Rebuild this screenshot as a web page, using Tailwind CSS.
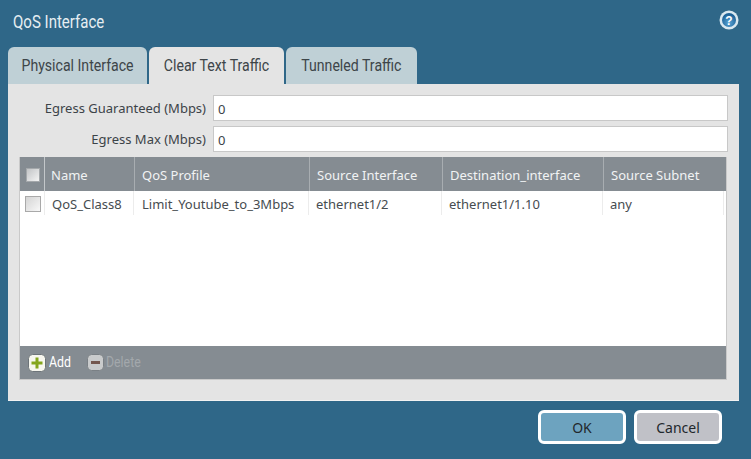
<!DOCTYPE html>
<html lang="en">
<head>
  <meta charset="UTF-8" />
  <title>QoS Interface</title>
  <script src="https://cdn.jsdelivr.net/npm/@tailwindcss/browser@4"></script>
</head>
<body class="bg-[#2f6788] w-[751px] h-[459px] overflow-hidden font-['Noto_Sans',sans-serif] text-[13px] text-[#3c4348]">
  <div class="flex flex-col h-full pl-2 pr-3">
    <!-- title -->
    <div class="flex justify-between items-start h-[47px] pl-[5px]">
      <h1 class="font-['Roboto',sans-serif] text-[18px] leading-[21px] mt-[11px] scale-x-[0.835] origin-left text-[#e6eef2]">QoS Interface</h1>
      <svg class="w-[20px] h-[20px] mt-[10px]" viewBox="0 0 20 20">
        <defs>
          <radialGradient id="helpFill" cx="50%" cy="70%" r="60%">
            <stop offset="0%" stop-color="#5aa4d4"/>
            <stop offset="100%" stop-color="#1d6298"/>
          </radialGradient>
        </defs>
        <circle cx="10" cy="10" r="9.5" fill="#d9e8f0"/>
        <circle cx="10" cy="10" r="7" fill="url(#helpFill)"/>
        <text x="10" y="14.5" text-anchor="middle" font-family="Liberation Sans" font-weight="700" font-size="12" fill="#fff">?</text>
      </svg>
    </div>

    <!-- tabs -->
    <div class="flex gap-[2px] h-[37px] font-['Roboto',sans-serif] text-[17px] text-[#3d4549]">
      <div class="w-[139px] bg-[#bfd0d6] rounded-t-[6px] flex items-center justify-center"><span class="scale-x-[0.83] whitespace-nowrap">Physical Interface</span></div>
      <div class="w-[135px] bg-[#e4e4e4] rounded-t-[6px] flex items-center justify-center"><span class="scale-x-[0.83] whitespace-nowrap">Clear Text Traffic</span></div>
      <div class="w-[131px] bg-[#bfd0d6] rounded-t-[6px] flex items-center justify-center"><span class="scale-x-[0.83] whitespace-nowrap">Tunneled Traffic</span></div>
    </div>

    <!-- panel -->
    <div class="w-[731px] h-[317px] bg-[#e4e4e4] border-b border-[#f2f2f2] pt-[11px] px-[11px]">
      <div class="flex items-center h-[26px]">
        <label class="w-[194px] text-right pr-[7px] pt-[2px]">Egress Guaranteed (Mbps)</label>
        <div class="w-[515px] h-[26px] bg-white border border-[#c8c8c8] pl-[4px] leading-[26px]">0</div>
      </div>
      <div class="flex items-center h-[26px] mt-[5px]">
        <label class="w-[194px] text-right pr-[7px] pt-[2px]">Egress Max (Mbps)</label>
        <div class="w-[515px] h-[26px] bg-white border border-[#c8c8c8] pl-[4px] leading-[26px]">0</div>
      </div>

      <!-- table -->
      <div class="w-[708px] h-[223px] mt-[5px] bg-white border border-[#c9c9c9] border-t-0 flex flex-col">
        <div class="flex h-[34px] bg-[#858c92] text-[#f1f3f4]">
          <div class="w-[25px] flex items-center justify-center pl-[2px] pt-[2px] border-r border-[#c3c7ca]">
            <span class="w-[14px] h-[14px] bg-gradient-to-br from-[#c2c4c6] to-[#f4f4f4] border border-[#a4a8ab]"></span>
          </div>
          <div class="w-[90px] flex items-center pl-[6px] pt-[3px] border-r border-[#a8adb1]">Name</div>
          <div class="w-[175px] flex items-center pl-[7px] pt-[3px] border-r border-[#a8adb1]">QoS Profile</div>
          <div class="w-[133px] flex items-center pl-[7px] pt-[3px] border-r border-[#a8adb1]">Source Interface</div>
          <div class="w-[161px] flex items-center pl-[7px] pt-[3px] border-r border-[#a8adb1]">Destination_interface</div>
          <div class="w-[122px] flex items-center pl-[7px] pt-[3px]">Source Subnet</div>
        </div>
        <div class="flex h-[24px] text-[#464c50]">
          <div class="w-[25px] flex items-center justify-center pl-[2px] pt-[2px] border-r border-[#ececec]">
            <span class="w-[16px] h-[16px] bg-gradient-to-br from-[#d4d4d4] to-[#f8f8f8] border border-[#a9a9a9]"></span>
          </div>
          <div class="w-[89px] flex items-center pl-[7px] pt-[3px] border-r border-[#ececec]">QoS_Class8</div>
          <div class="w-[175px] flex items-center pl-[8px] pt-[3px] border-r border-[#ececec]">Limit_Youtube_to_3Mbps</div>
          <div class="w-[133px] flex items-center pl-[7px] pt-[3px] border-r border-[#ececec]">ethernet1/2</div>
          <div class="w-[161px] flex items-center pl-[7px] pt-[3px] border-r border-[#ececec]">ethernet1/1.10</div>
          <div class="w-[121px] flex items-center pl-[7px] pt-[3px] border-r border-[#ececec]">any</div>
        </div>
        <div class="flex-1"></div>
        <div class="flex items-center h-[33px] bg-[#858c92] pl-[8px] font-['Roboto',sans-serif] text-[14px]">
          <svg class="w-[18px] h-[18px]" viewBox="0 0 18 18">
            <rect x="0.5" y="0.5" width="17" height="17" rx="4" fill="#f6f6ee" stroke="#6d7479"/>
            <path d="M9 3.5v11M3.5 9h11" stroke="#84a51d" stroke-width="3"/>
          </svg>
          <span class="ml-[3px] w-[22px] text-white scale-x-[0.88] origin-left">Add</span>
          <svg class="w-[17px] h-[17px] ml-[16px]" viewBox="0 0 17 17">
            <rect x="0.5" y="0.5" width="16" height="16" rx="4" fill="#c9cbcc" stroke="#7a8085"/>
            <path d="M4 8.5h9" stroke="#74574f" stroke-width="3"/>
          </svg>
          <span class="ml-[2px] text-[#a3a8ac] scale-x-[0.88] origin-left">Delete</span>
        </div>
      </div>
    </div>

    <!-- buttons -->
    <div class="flex justify-end gap-[8px] mt-[9px] pr-[17px] text-[14px] text-[#22282c]">
      <button class="w-[88px] h-[34px] bg-[#6da3bf] border-[3px] border-white rounded-[6px]">OK</button>
      <button class="w-[88px] h-[34px] bg-[#c0c1c7] border-[3px] border-white rounded-[6px]">Cancel</button>
    </div>
  </div>
</body>
</html>
